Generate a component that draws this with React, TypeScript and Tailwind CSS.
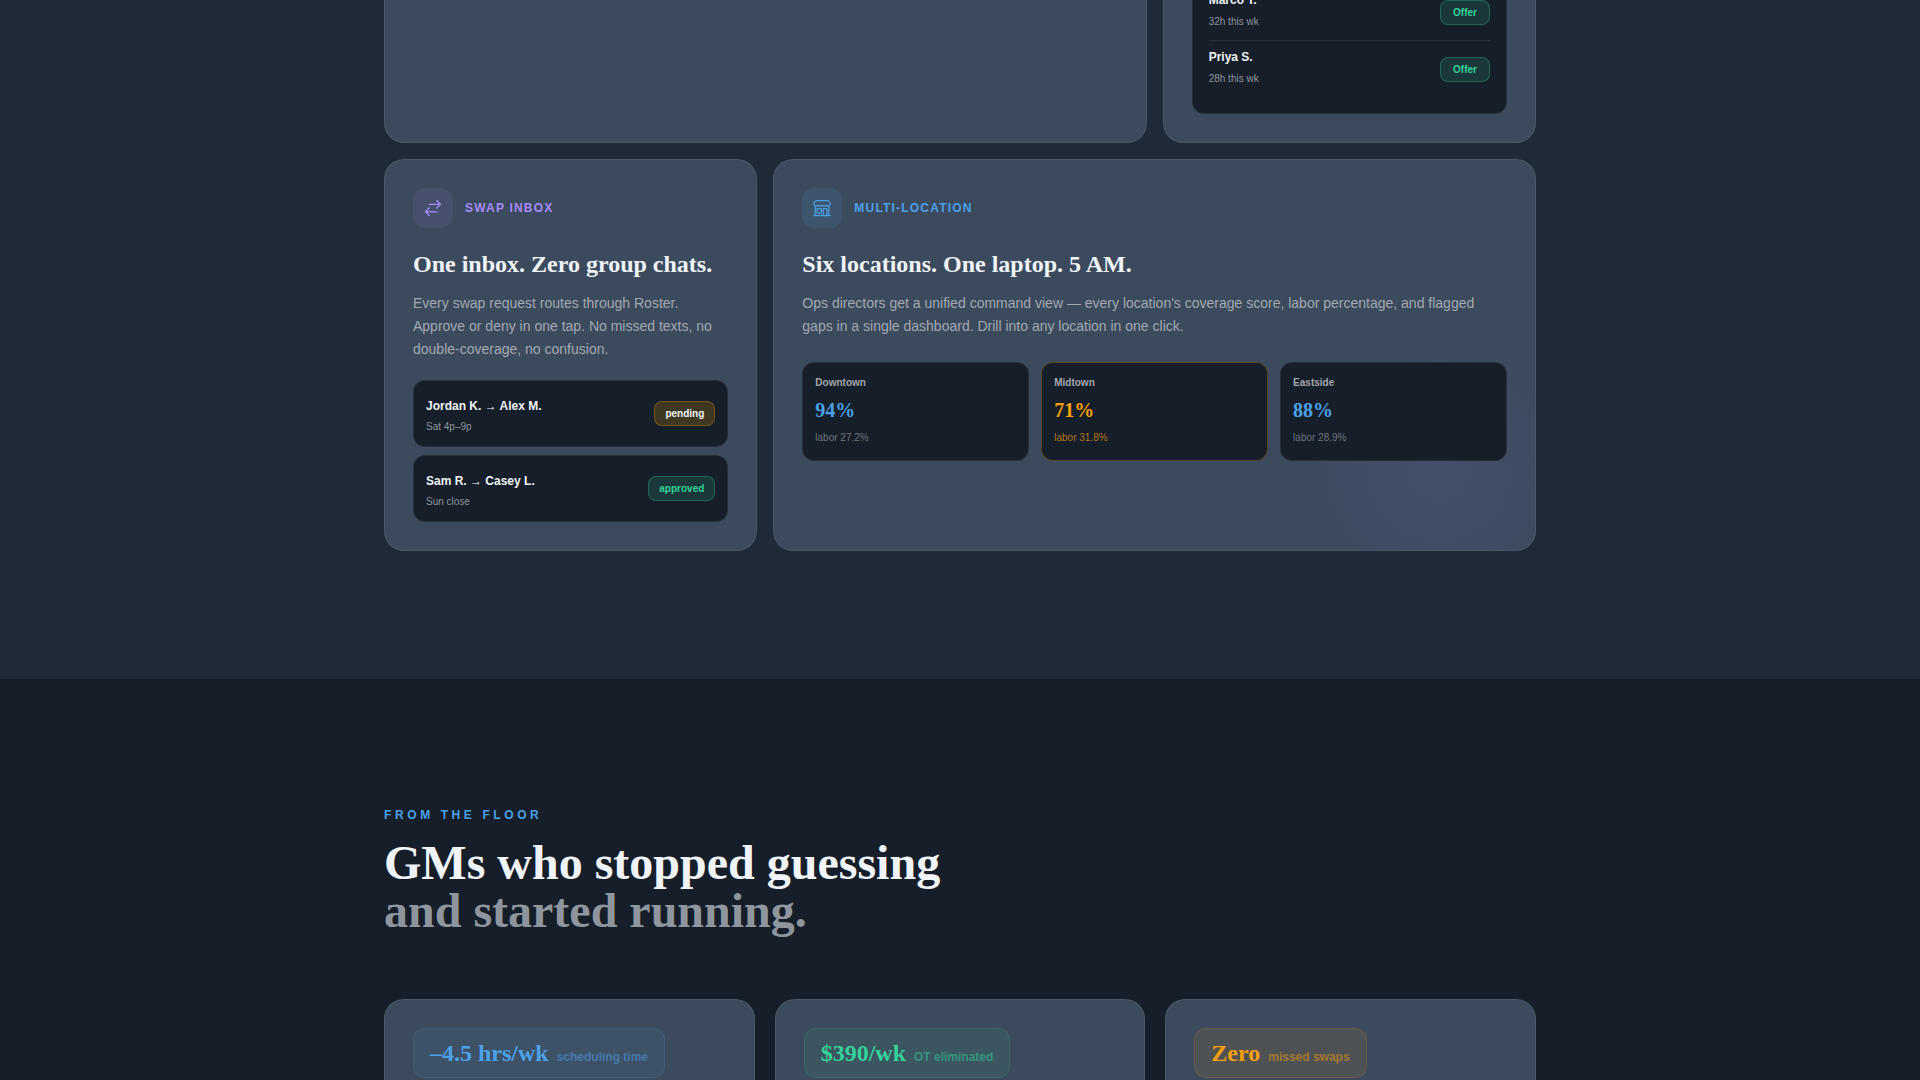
import React from "react";
import { HiOutlineArrowsRightLeft, HiOutlineBuildingStorefront } from "react-icons/hi2";

const serif = "font-['Liberation_Serif',serif] font-bold";
const panel = "border border-white/[0.08] bg-[#161e29]";

function OfferRow({ name, hours }: { name: string; hours: string }) {
  return (
    <li className="flex items-center justify-between border-b border-white/[0.08] py-2 last:border-b-0">
      <div>
        <p className="text-xs font-bold text-[#f0f4f8]">{name}</p>
        <p className="mt-1 text-[10px] leading-5 text-[#8f959d]">{hours}</p>
      </div>
      <button
        type="button"
        className="rounded-lg border border-[#34d399]/30 bg-[#34d399]/15 px-3 py-1 text-[10px] leading-[15px] font-bold text-[#34d399]"
      >
        Offer
      </button>
    </li>
  );
}

function SwapRow({ title, when, status }: { title: string; when: string; status: "pending" | "approved" }) {
  return (
    <li className={`flex items-center justify-between rounded-xl p-3 ${panel}`}>
      <div>
        <p className="text-xs leading-[26px] font-bold text-[#f0f4f8]">{title}</p>
        <p className="text-[10px] leading-[15px] text-[#8f959d]">{when}</p>
      </div>
      <span
        className={`rounded-lg border px-2.5 py-1 text-[10px] leading-[15px] font-bold ${
          status === "pending"
            ? "border-[#f59e0b]/30 bg-[#e0a10b]/20 text-[#f0f4f8]"
            : "border-[#34d399]/30 bg-[#34d399]/15 text-[#34d399]"
        }`}
      >
        {status}
      </span>
    </li>
  );
}

function Location({ name, score, labor, warn }: { name: string; score: string; labor: string; warn?: boolean }) {
  return (
    <div
      className={`rounded-xl border bg-[#161e29] p-3 ${warn ? "border-[#f59e0b]/30" : "border-white/[0.08]"}`}
    >
      <p className="text-[10px] leading-4 font-bold text-[#a2a6ab]">{name}</p>
      <p className={`mt-1 text-xl leading-[30px] ${serif} ${warn ? "text-[#f59e0b]" : "text-[#4ba1e7]"}`}>{score}</p>
      <p className={`mt-[3px] text-[10px] leading-5 ${warn ? "text-[#f59e0b]/70" : "text-[#70757d]"}`}>{labor}</p>
    </div>
  );
}

function CardHead({
  icon,
  label,
  tone,
  tint,
  title,
}: {
  icon: React.ReactNode;
  label: string;
  tone: string;
  tint: string;
  title: string;
}) {
  return (
    <>
      <div className={`flex items-center gap-3 ${tone}`}>
        <span className={`flex size-10 items-center justify-center rounded-xl ${tint}`}>{icon}</span>
        <span className="text-xs font-bold tracking-widest uppercase">{label}</span>
      </div>
      <h3 className={`mt-5 text-2xl text-[#f0f4f8] ${serif}`}>{title}</h3>
    </>
  );
}

function Quote({ value, label, tone }: { value: string; label: string; tone: string }) {
  return (
    <article className="rounded-t-[20px] border border-b-0 border-white/[0.08] bg-[#3c4a5d] px-7 pt-7">
      <div className={`inline-flex items-baseline gap-2 rounded-xl border px-4 py-2 ${tone}`}>
        <span className={`text-2xl ${serif}`}>{value}</span>
        <span className="text-xs font-bold opacity-50">{label}</span>
      </div>
    </article>
  );
}

export default function App() {
  return (
    <main className="flex min-h-screen flex-col bg-[#161e29] font-['Liberation_Sans',sans-serif] text-base">
      <section className="bg-[#1e2a38] pb-32">
        <div className="mx-auto grid max-w-6xl grid-cols-3 gap-4">
          <div className="col-span-2 rounded-b-[20px] border border-t-0 border-white/[0.08] bg-[#3c4a5d]" />
          <div className="rounded-b-[20px] border border-t-0 border-white/[0.08] bg-[#3c4a5d] px-7 pb-7">
            <div className={`overflow-hidden rounded-b-xl border-t-0 px-4 pb-4 ${panel}`}>
              <ul className="-mt-4">
                <OfferRow name="Marco T." hours="32h this wk" />
                <OfferRow name="Priya S." hours="28h this wk" />
              </ul>
            </div>
          </div>

          <article className="rounded-[20px] border border-white/[0.08] bg-[#3c4a5d] p-7">
            <CardHead
              icon={<HiOutlineArrowsRightLeft className="size-5" />}
              label="Swap inbox"
              tone="text-[#a78bfa]"
              tint="bg-[#a78bfa]/10"
              title="One inbox. Zero group chats."
            />
            <p className="mt-3 text-sm leading-relaxed text-[#a2a9b2]">
              Every swap request routes through Roster. Approve or deny in one tap. No missed texts, no
              double-coverage, no confusion.
            </p>
            <ul className="mt-5 flex flex-col gap-2">
              <SwapRow title="Jordan K. → Alex M." when="Sat 4p–9p" status="pending" />
              <SwapRow title="Sam R. → Casey L." when="Sun close" status="approved" />
            </ul>
          </article>

          <article className="relative isolate col-span-2 overflow-hidden rounded-[20px] border border-white/[0.08] bg-[#3c4a5d] p-7">
            <div className="absolute -right-12 -bottom-16 -z-10 size-72 bg-[radial-gradient(circle,rgba(167,139,250,0.08)_0%,transparent_70%)]" />
            <CardHead
              icon={<HiOutlineBuildingStorefront className="size-5" />}
              label="Multi-location"
              tone="text-[#4ba1e7]"
              tint="bg-[#4ba1e7]/12"
              title="Six locations. One laptop. 5 AM."
            />
            <p className="mt-3 text-sm leading-relaxed text-[#a2a9b2]">
              Ops directors get a unified command view — every location's coverage score, labor percentage, and
              flagged gaps in a single dashboard. Drill into any location in one click.
            </p>
            <div className="mt-6 grid grid-cols-3 gap-3">
              <Location name="Downtown" score="94%" labor="labor 27.2%" />
              <Location name="Midtown" score="71%" labor="labor 31.8%" warn />
              <Location name="Eastside" score="88%" labor="labor 28.9%" />
            </div>
          </article>
        </div>
      </section>

      <section className="flex flex-1 flex-col pt-32">
        <div className="mx-auto flex w-full max-w-6xl flex-1 flex-col">
          <p className="text-xs font-bold tracking-[0.3em] text-[#4ba1e7] uppercase">From the floor</p>
          <h2 className={`mt-4 text-5xl leading-none text-[#f0f4f8] ${serif}`}>
            GMs who stopped guessing
            <br />
            <span className="text-[#8f959d]">and started running.</span>
          </h2>
          <div className="mt-16 grid flex-1 grid-cols-3 gap-5">
            <Quote
              value="–4.5 hrs/wk"
              label="scheduling time"
              tone="border-[#4ba1e7]/15 bg-[#4ba1e7]/8 text-[#4ba1e7]"
            />
            <Quote
              value="$390/wk"
              label="OT eliminated"
              tone="border-[#34d399]/15 bg-[#34d399]/8 text-[#34d399]"
            />
            <Quote
              value="Zero"
              label="missed swaps"
              tone="border-[#f59e0b]/15 bg-[#f59e0b]/10 text-[#f59e0b]"
            />
          </div>
        </div>
      </section>
    </main>
  );
}
